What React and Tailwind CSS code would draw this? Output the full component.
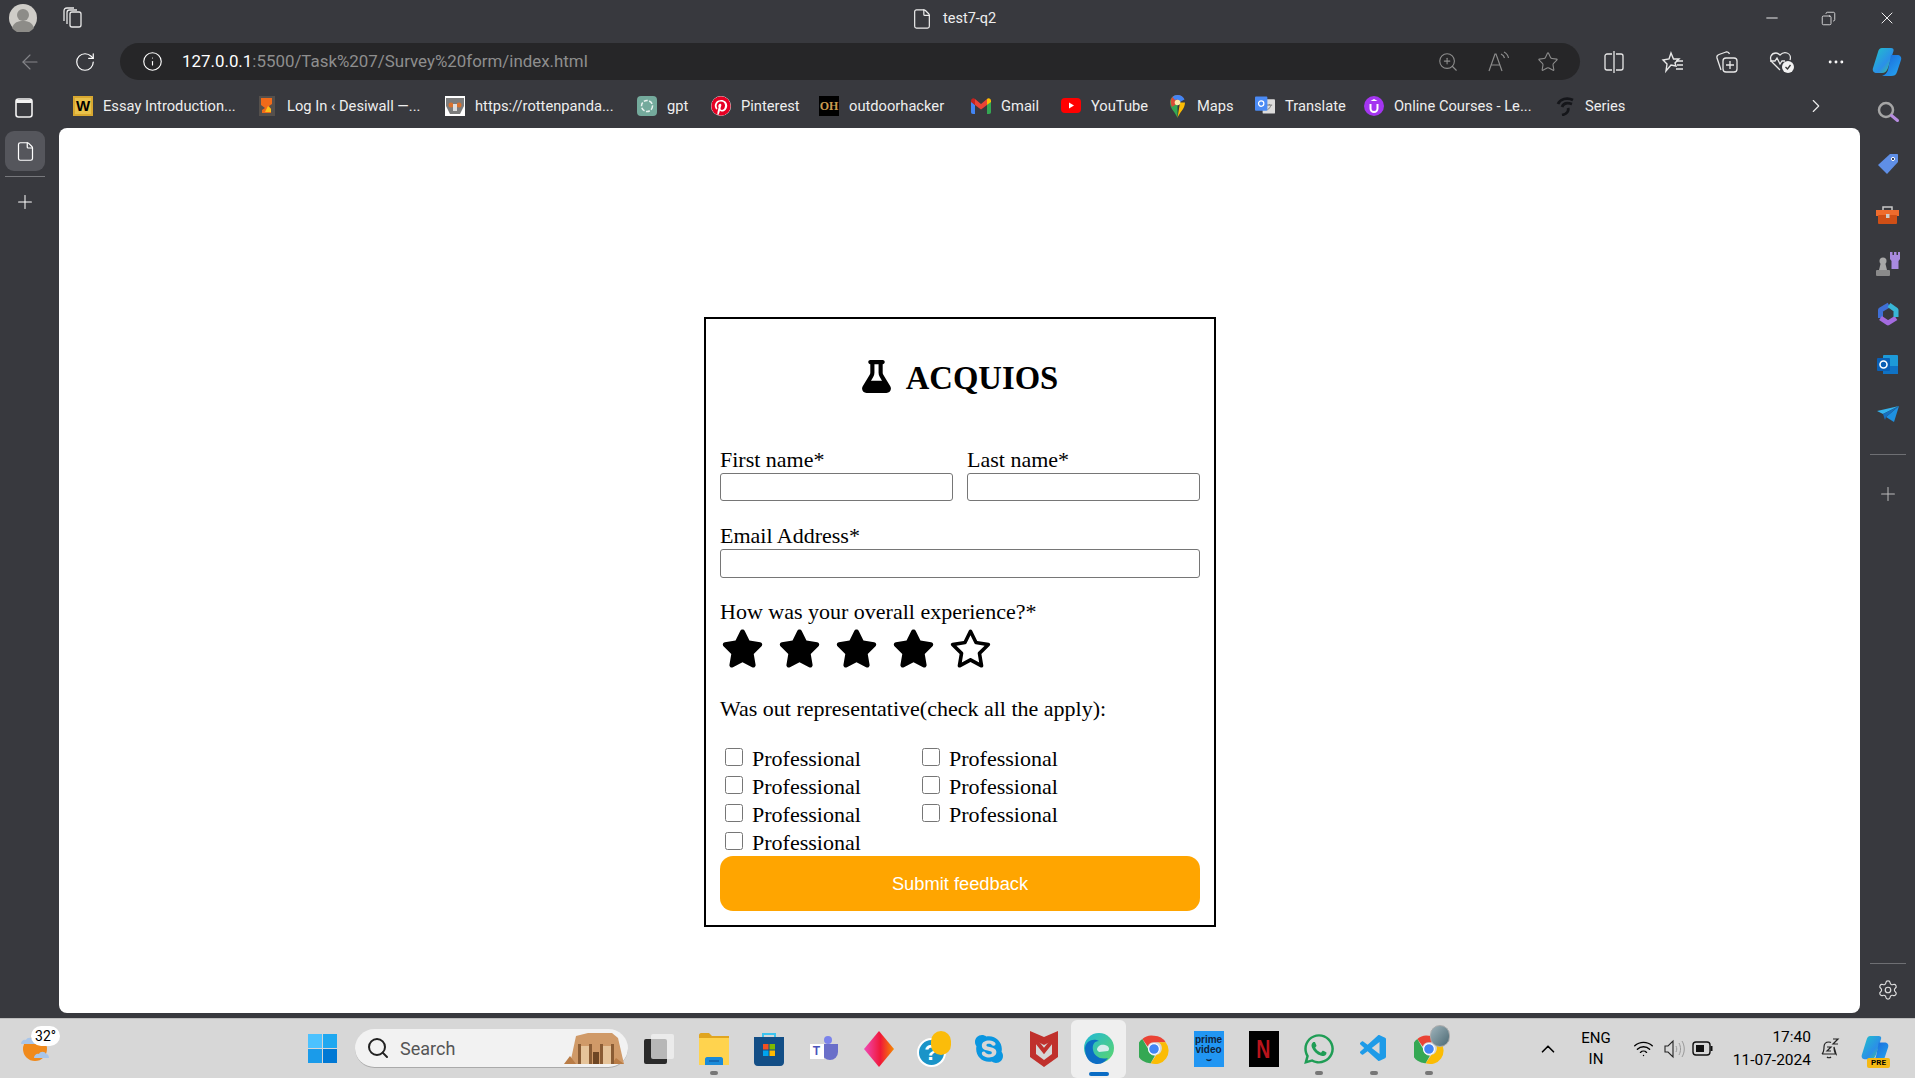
import React from 'react';
import {
  ArrowLeft, RotateCw, Info, ZoomIn, Star, Minus, X, Copy, Plus, File, Settings,
  ChevronRight, ChevronUp, Search, Wifi, MoreHorizontal,
} from 'lucide-react';
import { FaFlask, FaStar, FaRegStar, FaPinterest, FaWhatsapp, FaSkype } from 'react-icons/fa6';
import { VscVscode } from 'react-icons/vsc';

const Avatar = () => (
  <svg width="28" height="28" viewBox="0 0 28 28">
    <circle cx="14" cy="14" r="14" fill="#cfcdc8" />
    <circle cx="14" cy="11" r="6" fill="#8d8c88" />
    <path d="M3 24c2-6 6-7 11-7s9 1 11 7a14 14 0 0 1-22 0z" fill="#8d8c88" />
  </svg>
);

const TabsIcon = () => (
  <svg width="22" height="24" viewBox="0 0 22 24" fill="none" stroke="#e8e8e8" strokeWidth="1.3">
    <rect x="8" y="6" width="11" height="15" rx="2" />
    <path d="M5 18V6.5C5 5 6 4 7.500 4H15" />
    <path d="M2 15V5c0-2 1-3 3-3h7" />
  </svg>
);

const SidePanel = () => (
  <svg width="18" height="20" viewBox="0 0 18 20" fill="none">
    <rect x="1" y="1" width="16" height="18" rx="2.500" stroke="#f2f2f2" strokeWidth="1.600" />
    <path d="M1 2h16v3H1z" fill="#f2f2f2" />
  </svg>
);

const ReadAloud = () => (
  <svg width="24" height="24" viewBox="0 0 24 24" fill="none" stroke="#8c8c8c" strokeWidth="1.2">
    <path d="M3 21 9 4h1l6 17M5.500 15h8" />
    <path d="M15 4c2 1 3 2 3.500 4M18 2c2 1 4 3 4.500 6" />
  </svg>
);

const SplitIcon = () => (
  <svg width="20" height="24" viewBox="0 0 20 24" fill="none" stroke="#e8e8e8" strokeWidth="1.300">
    <path d="M8 4H3C2 4 1 5 1 6v12c0 1 1 2 2 2h5M12 4h5c1 0 2 1 2 2v12c0 1-1 2-2 2h-5" />
    <path d="M10 1v22" />
  </svg>
);

const FavList = () => (
  <svg width="24" height="24" viewBox="0 0 24 24" fill="none" stroke="#e8e8e8" strokeWidth="1.4">
    <path d="M10 3l2.500 6H18l-4 4 1 3-5-1-5 6 1-7-4-4 6-1z" />
    <path d="M15 11h7M16 15h6M15 19h7" />
  </svg>
);

const Collections = () => (
  <svg width="26" height="26" viewBox="0 0 26 26" fill="none" stroke="#e8e8e8" strokeWidth="1.3">
    <path d="M7 21 3 9c-.5-2 .5-3 2-3.500L12 3c2-.5 3 .5 3.500 2" />
    <rect x="9" y="9" width="14" height="14" rx="3" />
    <path d="M16 12v8M12 16h8" />
  </svg>
);

const Health = () => (
  <svg width="28" height="26" viewBox="0 0 28 26" fill="none" stroke="#e8e8e8" strokeWidth="1.3">
    <path d="M12 21 4 13C1 9 3 4 8 4c2 0 3 1 4 2 2-2 4-3 7-2 3 1 4 4 3 7" />
    <path d="M2 12h5l2-3 3 6 2-3h3" />
    <circle cx="20" cy="18" r="6" fill="#f2f2f2" stroke="none" />
    <path d="m17.500 18 2 2 3-4" stroke="#333" />
  </svg>
);

const Copilot = ({ size = 32, id = 'cp' }) => (
  <svg width={size} height={size} viewBox="0 0 32 32">
    <defs>
      <linearGradient id={`${id}a`} x1="0" y1="0" x2="1" y2="1">
        <stop offset="0" stopColor="#20c4c8" />
        <stop offset="0.6" stopColor="#2b8fe8" />
        <stop offset="1" stopColor="#3fd27a" />
      </linearGradient>
      <linearGradient id={`${id}b`} x1="0" y1="0" x2="1" y2="1">
        <stop offset="0" stopColor="#1a62d8" />
        <stop offset="1" stopColor="#25a9f2" />
      </linearGradient>
    </defs>
    <path d="M11 2h9c2 0 3 1 2.500 3L17 22c-1 3-3 5-6 5H6c-3 0-5-2-4-5l5-16c.6-2.500 2-4 4-4z" fill={`url(#${id}a)`} />
    <path d="M20 9h6c3 0 5 2 4 5l-4 12c-1 3-3 4-6 4h-9c3-1 5-3 6-6z" fill={`url(#${id}b)`} />
  </svg>
);

const SideSearch = () => (
  <svg width="24" height="24" viewBox="0 0 24 24" fill="none">
    <circle cx="10" cy="10" r="7" stroke="#a5a5a5" strokeWidth="2.5" />
    <path d="m15.500 15.500 6 5" stroke="#b78ce0" strokeWidth="3" strokeLinecap="round" />
  </svg>
);

const TagIcon = () => (
  <svg width="22" height="22" viewBox="0 0 22 22">
    <path d="M13 1h7c.6 0 1 .4 1 1v7L10 21 1 12z" fill="#5f8fe6" />
    <circle cx="16" cy="6" r="1.600" fill="#1c2a4a" stroke="#fff" strokeWidth="1" />
  </svg>
);

const Toolbox = () => (
  <svg width="23" height="20" viewBox="0 0 23 20">
    <path d="M7 6V2h9v4" fill="none" stroke="#c9c9c9" strokeWidth="1.500" />
    <rect x="0" y="5" width="23" height="6" fill="#ef6c2d" />
    <rect x="2" y="10" width="19" height="9" rx="1" fill="#cf4f16" />
    <rect x="10" y="9" width="3.500" height="4" fill="#ccc" />
  </svg>
);

const Chess = () => (
  <svg width="24" height="26" viewBox="0 0 24 26">
    <path d="M14 1h2.500v3H18V1h2.500v3H22V1h2v7l-1.500 2v8h-7v-8L14 8z" fill="#a98ae0" />
    <circle cx="7" cy="10" r="3.500" fill="#a8a8a8" />
    <path d="M4.500 13h5l1.500 6H3z" fill="#a8a8a8" />
    <rect x="0" y="19" width="14" height="6" rx="1" fill="#8a8a8a" />
  </svg>
);

const M365 = () => (
  <svg width="22" height="24" viewBox="0 0 22 24" fill="none" strokeWidth="5" strokeLinejoin="round">
    <path d="M12 3 3.500 8v8" stroke="#3f6fd6" />
    <path d="M3.500 16 11 21 19 16" stroke="#a46be0" />
    <path d="M12 3 19 8v7" stroke="#38b6d6" />
  </svg>
);

const Outlook = () => (
  <svg width="21" height="20" viewBox="0 0 21 20">
    <rect x="6" y="0" width="15" height="19" rx="1" fill="#1d9ad8" />
    <path d="M6 11h15v8H6z" fill="#0f72c4" />
    <rect x="0" y="3" width="13" height="13" rx="1" fill="#0a5fb4" />
    <circle cx="6.500" cy="9.500" r="3.500" fill="none" stroke="#fff" strokeWidth="1.600" />
  </svg>
);

const SendIcon = () => (
  <svg width="22" height="16" viewBox="0 0 22 16">
    <path d="M0 5 22 0 6 8z" fill="#35b4ee" />
    <path d="M22 0 17 16 9 11z" fill="#1e90e0" />
    <path d="M6 8 22 0 9 11l-1 3z" fill="#1670c0" />
  </svg>
);

// Favicons of the bookmark bar
const WIcon = () => (
  <div className="w-5 h-5 bg-[#e8c14a] border-2 border-[#d8a830] flex items-center justify-center text-black font-bold text-[15px] leading-none font-['Liberation_Sans',sans-serif]">W</div>
);

const DesiIcon = () => (
  <svg width="16" height="20" viewBox="0 0 16 20">
    <rect width="16" height="20" fill="#55504c" />
    <path d="M2 2h11v6l-3 2 2 3v4H3v-3l3-2-4-3z" fill="#f06a1a" />
    <path d="M9 10l3 3v3H6z" fill="#f7c21c" />
  </svg>
);

const PandaIcon = () => (
  <svg width="20" height="20" viewBox="0 0 20 20">
    <rect width="20" height="20" fill="#fff" />
    <path d="M1 2h18v8l-4 8H5l-4-8z" fill="#7c7c7c" />
    <circle cx="6" cy="9" r="2.500" fill="#d9722e" />
    <circle cx="14" cy="9" r="2.500" fill="#d9722e" />
    <path d="M8 8h4v7H8z" fill="#ddd" />
  </svg>
);

const GptIcon = () => (
  <svg width="20" height="20" viewBox="0 0 20 20">
    <rect width="20" height="20" rx="4" fill="#74aa9c" />
    <circle cx="10" cy="10" r="5.500" fill="none" stroke="#e8f2ef" strokeWidth="1.500" strokeDasharray="4 1.500" />
  </svg>
);

const OhIcon = () => (
  <div className="w-5 h-5 bg-black text-[#c99a4e] font-bold text-[12px] flex items-center justify-center font-['Liberation_Serif',serif] leading-none">OH</div>
);

const GmailIcon = () => (
  <svg width="20" height="16" viewBox="0 0 20 16">
    <path d="M0 3v11c0 1 .6 2 2 2h2V7z" fill="#4285f4" />
    <path d="M20 3v11c0 1-.6 2-2 2h-2V7z" fill="#34a853" />
    <path d="M4 7 10 11.500 16 7V1l-6 5L4 1z" fill="#ea4335" />
    <path d="M0 3c0-3 3-3.500 4-2v6L0 4z" fill="#c5221f" />
    <path d="M20 3c0-3-3-3.500-4-2v6l4-3z" fill="#fbbc04" />
  </svg>
);

const YoutubeIcon = () => (
  <svg width="20" height="15" viewBox="0 0 20 15">
    <rect width="20" height="15" rx="4" fill="#f00" />
    <path d="m8 4.500 5 3-5 3z" fill="#fff" />
  </svg>
);

const MapsIcon = () => (
  <svg width="15" height="23" viewBox="0 0 15 23">
    <path d="M7.500 23C6 18 0 14 0 7.500 0 3 3.500 0 7.500 0z" fill="#34a853" />
    <path d="M7.500 23C9 18 15 14 15 7.500H10z" fill="#fbbc04" />
    <path d="M2 2.500C3.500 1 5.500 0 7.500 0c3 0 5.500 2 6.500 4L2 12C.5 9 0 5 2 2.500z" fill="#ea4335" opacity=".9" />
    <path d="M7.500 0c3.500 0 6 2 7 4.500L10 7C9 4 6 4 5 5L2.500 2C3.800.8 5.500 0 7.500 0z" fill="#4285f4" />
    <circle cx="7.500" cy="7.500" r="2.800" fill="#fbe9a8" />
  </svg>
);

const TranslateIcon = () => (
  <svg width="21" height="20" viewBox="0 0 21 20">
    <rect x="8" y="3" width="13" height="15" rx="1" fill="#dcdcdc" />
    <path d="M12 9h6M15 8v1M13 14c2-1 3-3 4-5" stroke="#777" strokeWidth="1" fill="none" />
    <rect x="0" y="0" width="13" height="15" rx="1" fill="#4a8af4" />
    <circle cx="6.500" cy="7.500" r="2.800" fill="none" stroke="#fff" strokeWidth="1.300" />
  </svg>
);

const UdemyIcon = () => (
  <svg width="20" height="20" viewBox="0 0 20 20">
    <circle cx="10" cy="10" r="10" fill="#a435f0" />
    <path d="M6.500 8v4.500a3.500 3.500 0 0 0 7 0V8" fill="none" stroke="#fff" strokeWidth="2" />
    <path d="M10 3l3.500 2h-7z" fill="#fff" />
  </svg>
);

const SeriesIcon = () => (
  <svg width="20" height="20" viewBox="0 0 20 20" fill="none" stroke="#15161a" strokeWidth="2.800">
    <path d="M18 4C12 1 5 3 3 8M17 8c-6-2-9 0-10 3M13 12c1 3-1 6-6 7" />
  </svg>
);

const bookmarks = [
  { icon: <WIcon />, label: 'Essay Introduction...', w: 'w-[133px]', ml: 'ml-[14px]' },
  { icon: <DesiIcon />, label: 'Log In ‹ Desiwall —...', w: 'w-[138px]', ml: 'ml-[21px]' },
  { icon: <PandaIcon />, label: 'https://rottenpanda...', w: 'w-[143px]', ml: 'ml-[20px]' },
  { icon: <GptIcon />, label: 'gpt', w: 'w-[23px]', ml: 'ml-[19px]' },
  { icon: <FaPinterest size={20} color="#e60023" className="bg-white rounded-full" />, label: 'Pinterest', w: 'w-[59px]', ml: 'ml-[21px]' },
  { icon: <OhIcon />, label: 'outdoorhacker', w: 'w-[98px]', ml: 'ml-[19px]' },
  { icon: <GmailIcon />, label: 'Gmail', w: 'w-[39px]', ml: 'ml-[24px]' },
  { icon: <YoutubeIcon />, label: 'YouTube', w: 'w-[57px]', ml: 'ml-[21px]' },
  { icon: <MapsIcon />, label: 'Maps', w: 'w-[37px]', ml: 'ml-[19px]' },
  { icon: <TranslateIcon />, label: 'Translate', w: 'w-[59px]', ml: 'ml-[21px]' },
  { icon: <UdemyIcon />, label: 'Online Courses - Le...', w: 'w-[142px]', ml: 'ml-[20px]' },
  { icon: <SeriesIcon />, label: 'Series', w: 'w-[39px]', ml: 'ml-[19px]' },
];

// Taskbar icons
const WeatherIcon = () => (
  <svg width="36" height="36" viewBox="0 0 36 36">
    <circle cx="15" cy="20" r="12" fill="#f08a1c" />
    <path d="M1 15c0-3 3-5 5-4 1-3 6-3 7 0 2 0 3 2 3 4z" fill="#a9c6ea" />
    <path d="M14 29c0-3 3-5 5-4 1-3 6-3 7 0 2 0 3 2 3 4z" fill="#a9c6ea" />
  </svg>
);

const WinLogo = () => (
  <div className="grid grid-cols-2 gap-[1.500px] w-[29px] h-[29px]">
    <div className="bg-[#4cc2ff]" />
    <div className="bg-[#1fa8f0]" />
    <div className="bg-[#1a9bea]" />
    <div className="bg-[#0078d4]" />
  </div>
);

const TempleThumb = () => (
  <svg width="60" height="36" viewBox="0 0 60 36">
    <path d="M6 34 12 6 24 3 48 3 54 8 60 34z" fill="#d09a68" />
    <path d="M0 34 6 26 12 34zM52 28l8 6H48z" fill="#b97c46" />
    <path d="M14 34V14h3v20zM25 34V14h3v20zM36 34V14h3v20zM47 34V14h3v20z" fill="#8a5c34" />
    <path d="M17 16h8v18h-8zM39 16h8v18h-8z" fill="#e6c49a" />
    <path d="M29 22h6v12h-6z" fill="#6e4624" />
  </svg>
);

const TaskView = () => (
  <div className="relative w-[30px] h-[30px]">
    <div className="absolute left-0 bottom-0 w-[23px] h-[25px] rounded-[2px] bg-[#2a2a2a]" />
    <div className="absolute right-0 top-0 w-[23px] h-[25px] rounded-[2px] bg-[#f4f4f4]/70" />
  </div>
);

const Explorer = () => (
  <svg width="30" height="32" viewBox="0 0 30 32">
    <path d="M0 2c0-1 1-2 2-2h8l3 3h17v3H0z" fill="#e0a520" />
    <path d="M0 5h30v27H0z" fill="#ffd34e" />
    <path d="M6 26c0-1 1-2 2-2h14c1 0 2 1 2 2v6H6z" fill="#1a8ad8" />
    <path d="M10 28h10" stroke="#0a4a90" strokeWidth="1" />
  </svg>
);

const StoreIcon = () => (
  <svg width="30" height="34" viewBox="0 0 30 34">
    <path d="M9 6V2h12v4" fill="none" stroke="#3cc4f0" strokeWidth="2" />
    <path d="M0 5h30v25c0 2-1 4-4 4H4c-3 0-4-2-4-4z" fill="#134e86" />
    <rect x="9" y="12" width="5.500" height="5.500" fill="#f25022" />
    <rect x="15.500" y="12" width="5.500" height="5.500" fill="#7fba00" />
    <rect x="9" y="18.500" width="5.500" height="5.500" fill="#00a4ef" />
    <rect x="15.500" y="18.500" width="5.500" height="5.500" fill="#ffb900" />
  </svg>
);

const TeamsIcon = () => (
  <div className="relative w-[28px] h-[26px]">
    <div className="absolute right-0 top-[8px] w-[16px] h-[16px] rounded-b-[8px] bg-[#6a6fc9]" />
    <div className="absolute right-[6px] top-0 w-[8px] h-[8px] rounded-full bg-[#7b83eb]" />
    <div className="absolute left-0 top-[8px] w-[14px] h-[15px] bg-white text-[#4b53bc] font-bold text-[12px] leading-[15px] text-center font-['Liberation_Sans',sans-serif]">T</div>
  </div>
);

const DiamondIcon = () => (
  <svg width="30" height="36" viewBox="0 0 30 36">
    <defs>
      <linearGradient id="dia" x1="0" y1="0" x2="1" y2="0">
        <stop offset="0" stopColor="#f04ab8" />
        <stop offset="0.55" stopColor="#f01838" />
        <stop offset="1" stopColor="#f58a00" />
      </linearGradient>
    </defs>
    <path d="M15 0 30 18 15 36 0 18z" fill="url(#dia)" />
  </svg>
);

const HelpIcon = () => (
  <div className="relative w-[34px] h-[36px]">
    <div className="absolute left-0 bottom-0 w-[29px] h-[29px] rounded-full bg-[#1a94c8] border-2 border-white text-white font-bold text-[22px] leading-[25px] text-center font-['Liberation_Sans',sans-serif]">?</div>
    <div className="absolute right-0 top-0 w-[20px] h-[24px] rounded-full bg-[#fbbc0a]" />
  </div>
);

const McAfee = () => (
  <svg width="28" height="36" viewBox="0 0 28 36">
    <path d="M0 0 14 6 28 0v26L14 36 0 26z" fill="#c0302c" />
    <path d="M6 10 14 14 22 10v13l-8 6-8-6z" fill="#d6d6d6" />
    <path d="M6 10l8 10 8-10" fill="none" stroke="#c0302c" strokeWidth="4" />
  </svg>
);

const EdgeIcon = () => (
  <svg width="30" height="34" viewBox="0 0 30 34">
    <defs>
      <linearGradient id="edg" x1="0" y1="0" x2="1" y2="1">
        <stop offset="0" stopColor="#1fb8d8" />
        <stop offset="1" stopColor="#5ed66a" />
      </linearGradient>
    </defs>
    <circle cx="15" cy="16" r="15" fill="url(#edg)" />
    <path d="M1 16C2 8 10 6 15 9c-5 0-7 4-6 9 1 6 7 10 15 8-4 6-11 8-17 4C3 28 1 22 1 16z" fill="#0c6ec4" />
    <path d="M13 18c0-4 4-6 8-5 4 1 5 4 3 6l-9 1z" fill="#d6ecec" />
  </svg>
);

const ChromeIcon = () => (
  <svg width="30" height="36" viewBox="0 0 36 36">
    <path d="M18 2a16 16 0 0 1 14 8H18a8 8 0 0 0-7.500 5L4 6a16 16 0 0 1 14-4z" fill="#ea4335" />
    <path d="M4 6l7 12a8 8 0 0 0 8 8l-5 9A16 16 0 0 1 4 6z" fill="#34a853" />
    <path d="M32 10a16 16 0 0 1-18 25l7-10a8 8 0 0 0 2-15z" fill="#fbbc04" />
    <circle cx="18" cy="18" r="6.500" fill="#4285f4" stroke="#fff" strokeWidth="1.500" />
  </svg>
);

const PrimeIcon = () => (
  <div className="w-[30px] h-[36px] bg-[#2196f3] text-[#10233c] font-bold text-[10px] leading-[10px] text-center pt-[4px] font-['Liberation_Sans',sans-serif]">
    prime<br />video
    <div className="text-[9px] leading-[8px]">⌣</div>
  </div>
);

const NetflixIcon = () => (
  <div className="w-[30px] h-[36px] bg-black text-[#b8141c] font-bold text-[26px] leading-[36px] text-center font-['Liberation_Sans',sans-serif]">
    <span className="inline-block scale-x-75">N</span>
  </div>
);

const BatteryIcon = () => (
  <svg width="21" height="15" viewBox="0 0 21 15" fill="none">
    <rect x="1" y="1" width="17" height="13" rx="3" stroke="#111" strokeWidth="1.400" />
    <rect x="4" y="4" width="8" height="7" fill="#111" />
    <path d="M19.500 5v5" stroke="#111" strokeWidth="2" />
  </svg>
);

const VolumeIcon = () => (
  <svg width="22" height="22" viewBox="0 0 22 22" fill="none">
    <path d="M1 8v6h3l5 5V3L4 8z" stroke="#222" strokeWidth="1.100" />
    <path d="M12 8c1 2 1 4 0 6M15 5c2 4 2 8 0 12M18 3c3 5 3 11 0 16" stroke="#999" strokeWidth="1" />
  </svg>
);

const Dot = () => <div className="absolute bottom-[3px] w-[8px] h-[4px] rounded-full bg-[#777]" />;

const apps = [
  { icon: <TaskView /> },
  { icon: <Explorer />, dot: true },
  { icon: <StoreIcon /> },
  { icon: <TeamsIcon /> },
  { icon: <DiamondIcon /> },
  { icon: <HelpIcon /> },
  { icon: <FaSkype size={32} color="#0a96e0" /> },
  { icon: <McAfee /> },
  { icon: <EdgeIcon />, active: true },
  { icon: <ChromeIcon /> },
  { icon: <PrimeIcon /> },
  { icon: <NetflixIcon /> },
  { icon: <FaWhatsapp size={34} color="#1f9d55" />, dot: true },
  { icon: <VscVscode size={32} color="#1e9be8" />, dot: true },
  {
    icon: (
      <div className="relative">
        <ChromeIcon />
        <div className="absolute -right-[6px] -top-[6px] w-[20px] h-[22px] rounded-full bg-gradient-to-br from-[#9fb4bc] to-[#4d6a74] border border-[#aaa]" />
      </div>
    ),
    dot: true,
  },
];

const CheckRow = () => (
  <label className="flex items-center h-[28px]">
    <input type="checkbox" className="m-0 w-[18px] h-[18px] mr-[9px] -mt-[3px]" />
    <span>Professional</span>
  </label>
);

export default function App() {
  return (
    <div className="w-[1915px] h-[1078px] overflow-hidden flex flex-col bg-[#38393e] text-white font-['Roboto',sans-serif]">
      {/* title row */}
      <div className="h-[43px] flex items-start relative">
        <div className="ml-[9px] mt-[4px]"><Avatar /></div>
        <div className="ml-[25px] mt-[6px]"><TabsIcon /></div>
        <div className="absolute left-[911px] top-[8px] flex items-center gap-[10px] text-[14.500px] text-[#eee]">
          <File size={22} strokeWidth={1.3} />
          <span>test7-q2</span>
        </div>
        <div className="ml-auto mt-[8px] flex items-center">
          <div className="w-[57px] flex justify-center"><Minus size={18} strokeWidth={1.2} /></div>
          <div className="w-[58px] flex justify-center -scale-x-100"><Copy size={15} strokeWidth={1.2} /></div>
          <div className="w-[58px] flex justify-center -mr-[1px]"><X size={20} strokeWidth={1.1} /></div>
        </div>
      </div>

      {/* address row */}
      <div className="h-[43px] flex items-start">
        <div className="w-[60px] h-[37px] flex items-center justify-center"><ArrowLeft size={24} strokeWidth={1.1} color="#85868a" /></div>
        <div className="w-[50px] h-[37px] flex items-center justify-center"><RotateCw size={22} strokeWidth={1.3} /></div>
        <div className="ml-[10px] w-[1460px] h-[37px] rounded-full bg-[#262628] flex items-center">
          <Info size={21} strokeWidth={1.3} className="ml-[22px]" />
          <div className="ml-[19px] mt-px text-[16.900px] text-[#8e8e8e]"><span className="text-white">127.0.0.1</span>:5500/Task%207/Survey%20form/index.html</div>
          <div className="ml-auto flex items-center mr-[7px]">
            <div className="w-[50px] flex justify-center"><ZoomIn size={22} strokeWidth={1.2} color="#8c8c8c" /></div>
            <div className="w-[50px] flex justify-center"><ReadAloud /></div>
            <div className="w-[50px] flex justify-center"><Star size={22} strokeWidth={1.2} color="#8c8c8c" /></div>
          </div>
        </div>
        <div className="h-[37px] flex items-center">
          <div className="w-[68px] flex justify-center"><SplitIcon /></div>
          <div className="w-[50px] flex justify-center"><FavList /></div>
          <div className="w-[57px] flex justify-center"><Collections /></div>
          <div className="w-[54px] flex justify-center"><Health /></div>
          <div className="w-[53px] flex justify-center"><MoreHorizontal size={20} strokeWidth={1.5} /></div>
          <div className="w-[50px] flex justify-center"><Copilot /></div>
        </div>
      </div>

      {/* middle */}
      <div className="flex-1 flex min-h-0">
        <div className="w-[59px] flex flex-col items-center">
          <div className="h-[42px] pt-[1px] flex items-center -ml-[12px]"><SidePanel /></div>
          <div className="self-start ml-[5px] mt-[3px] w-[40px] h-[40px] rounded-[9px] bg-[#55565c] flex items-center justify-center"><File size={21} strokeWidth={1.4} /></div>
          <div className="self-start ml-[5px] mt-[5px] w-[40px] h-px bg-[#77787c]" />
          <div className="self-start ml-[14px] mt-[14px]"><Plus size={22} strokeWidth={1.1} /></div>
        </div>

        <div className="flex-1 flex flex-col min-w-0">
          <div className="h-[42px] pb-[2px] flex items-center text-[14.700px] text-[#eee]">
            {bookmarks.map((b) => (
              <div key={b.label} className={`flex items-center ${b.ml}`}>
                <div className="w-5 flex justify-center">{b.icon}</div>
                <span className={`ml-[10px] whitespace-nowrap ${b.w}`}>{b.label}</span>
              </div>
            ))}
            <ChevronRight size={22} strokeWidth={1.2} className="ml-auto mr-[33px]" />
          </div>

          <div className="flex-1 bg-white rounded-[8px] flex justify-center pl-px pt-[189px] text-black font-['Liberation_Serif',serif] text-[22px] leading-[25px]">
            <div className="w-[512px] h-[610px] border-2 border-black px-[14px]">
              <div className="mt-[40px] h-[38px] pr-[2px] flex items-center justify-center gap-[13px] font-bold text-[32.700px]">
                <FaFlask size={33} className="-mt-[3px]" />
                <span>ACQUIOS</span>
              </div>

              <div className="mt-[50px] grid grid-cols-2 gap-x-[14px]">
                <label className="block">
                  First name*
                  <input type="text" className="block mt-px w-full h-[28px] border border-[#767676] rounded-[3px]" />
                </label>
                <label className="block">
                  Last name*
                  <input type="text" className="block mt-px w-full h-[28px] border border-[#767676] rounded-[3px]" />
                </label>
              </div>

              <label className="block mt-[22px]">
                Email Address*
                <input type="email" className="block mt-px w-full h-[29px] border border-[#767676] rounded-[3px]" />
              </label>

              <div className="mt-[21px]">How was your overall experience?*</div>
              <div className="mt-[4px] flex gap-[14px] h-[41px] items-center pl-px">
                <FaStar size={43} />
                <FaStar size={43} />
                <FaStar size={43} />
                <FaStar size={43} />
                <FaRegStar size={43} />
              </div>

              <div className="mt-[27px]">Was out representative(check all the apply):</div>

              <div className="mt-[23px] flex pl-[5px]">
                <div className="w-[197px]">
                  <CheckRow />
                  <CheckRow />
                  <CheckRow />
                  <CheckRow />
                </div>
                <div>
                  <CheckRow />
                  <CheckRow />
                  <CheckRow />
                </div>
              </div>

              <button className="block w-full h-[55px] rounded-[13px] bg-[#ffa500] text-white text-[18.300px] font-['Liberation_Sans',sans-serif]">
                Submit feedback
              </button>
            </div>
          </div>
        </div>

        <div className="w-[55px] flex flex-col items-center pt-[14px]">
          <SideSearch />
          <div className="mt-[29px]"><TagIcon /></div>
          <div className="mt-[30px]"><Toolbox /></div>
          <div className="mt-[26px]"><Chess /></div>
          <div className="mt-[25px]"><M365 /></div>
          <div className="mt-[29px]"><Outlook /></div>
          <div className="mt-[31px]"><SendIcon /></div>
          <div className="mt-[32px] w-[36px] h-px bg-[#6e6f73]" />
          <div className="mt-[28px]"><Plus size={22} strokeWidth={1.1} color="#bbb" /></div>
          <div className="mt-auto w-[36px] h-px bg-[#6e6f73]" />
          <div className="mt-[15px] mb-[12px]"><Settings size={22} strokeWidth={1.3} color="#ddd" /></div>
        </div>
      </div>

      {/* taskbar */}
      <div className="mt-[5px] h-[60px] bg-[#d7d7d7] border-t border-[#bdbdbd] flex items-center text-black relative">
        <div className="absolute left-[20px] top-[10px]">
          <WeatherIcon />
          <div className="absolute left-[11px] -top-[3px] w-[29px] h-[20px] rounded-full bg-white text-[14px] leading-[20px] text-center">32°</div>
        </div>
        <div className="ml-[308px]"><WinLogo /></div>
        <div className="ml-[18px] w-[273px] h-[39px] rounded-full bg-[#f2f2f2] border-b border-[#aaa] flex items-center">
          <Search size={24} strokeWidth={2} className="ml-[11px]" color="#222" />
          <span className="ml-[10px] text-[18px] text-[#555]">Search</span>
          <div className="ml-auto mr-[4px]"><TempleThumb /></div>
        </div>
        <div className="ml-[3px] flex">
          {apps.map((a, i) => (
            <div key={i} className={`relative w-[55px] h-[58px] flex items-center justify-center ${a.active ? 'rounded-[6px] bg-[#efefef]' : ''}`}>
              {a.icon}
              {a.dot && <Dot />}
              {a.active && <div className="absolute bottom-[2px] w-[20px] h-[4px] rounded-full bg-[#0a6cc4]" />}
            </div>
          ))}
        </div>
        <ChevronUp size={22} strokeWidth={1.8} className="ml-[81px]" />
        <div className="ml-[17px] w-[40px] text-center text-[15px] leading-[21px]">ENG<br />IN</div>
        <div className="ml-[17px]"><Wifi size={21} strokeWidth={1.6} /></div>
        <div className="ml-[10px]"><VolumeIcon /></div>
        <div className="ml-[6px]"><BatteryIcon /></div>
        <div className="ml-[18px] w-[80px] text-right text-[15.500px] leading-[23px]">17:40<br />11-07-2024</div>
        <div className="ml-[9px] text-[13px]">
          <svg width="20" height="24" viewBox="0 0 20 24" fill="none" stroke="#222" strokeWidth="1.200">
            <path d="M2 17c2-2 2-4 2-7s2-5 5-5c1 0 1.500 0 2 .5M14 10c0 3 0 5 2 7zM2 17h14M7 20c1 1 3 1 4 0" />
            <path d="M13 2h5l-5 5h5M7 10h4l-4 4h4" />
          </svg>
        </div>
        <div className="relative ml-[20px]">
          <Copilot size={30} id="cq" />
          <div className="absolute -bottom-[4px] left-[7px] w-[23px] h-[10px] rounded-[2px] bg-[#f5b915] text-[8px] leading-[10px] text-center font-bold">PRE</div>
        </div>
      </div>
    </div>
  );
}
